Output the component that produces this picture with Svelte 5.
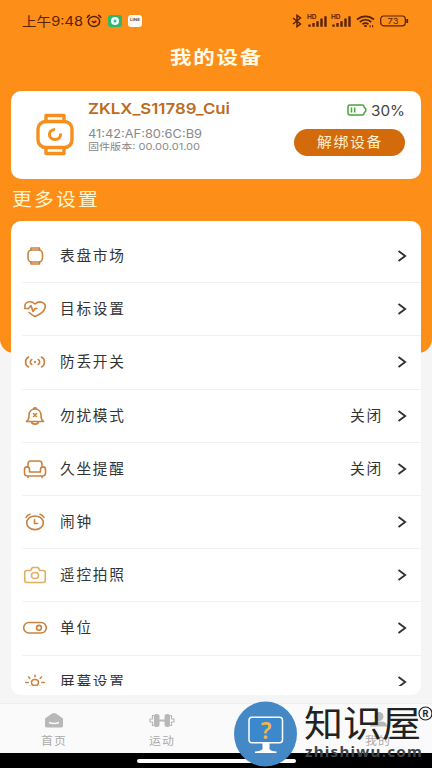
<script>
  const rows = [
    { icon: 'watch', label: '表盘市场' },
    { icon: 'heart', label: '目标设置' },
    { icon: 'signal', label: '防丢开关' },
    { icon: 'bell', label: '勿扰模式', value: '关闭' },
    { icon: 'sofa', label: '久坐提醒', value: '关闭' },
    { icon: 'alarm', label: '闹钟' },
    { icon: 'camera', label: '遥控拍照' },
    { icon: 'toggle', label: '单位' },
    { icon: 'sun', label: '屏幕设置' }
  ];

  // Stretches a single line of text horizontally to the given width.
  function fit(node, target) {
    const natural = node.getBoundingClientRect().width;
    node.style.transform = `scaleX(${target / natural})`;
    node.style.marginRight = `${target - natural}px`;
  }
</script>

{#snippet bars()}
  <svg width="21" height="14" viewBox="0 0 21 14">
    <text x="0" y="5.2" font-size="6" font-weight="700" textLength="9.5" lengthAdjust="spacingAndGlyphs" fill="#5a2206">HD</text>
    <path d="M2.500 10.500v2.200M6.500 9v3.700M10.500 7.200v5.500M14.500 4.500v8.200M18.500 2.200v10.500" stroke="#5a2206" stroke-width="2.400" />
  </svg>
{/snippet}

{#snippet icon(name)}
  <svg class="icon" class:light={name === 'camera'} width="26" height="26" viewBox="0 0 26 26">
    {#if name === 'watch'}
      <rect x="6" y="7" width="14.500" height="12" rx="4" />
      <path d="M9 7V5h8.500v2M9 19v2h8.500v-2" />
    {:else if name === 'heart'}
      <path d="M3 11C2 6.500 8 3.500 13 8c5-4.500 11.500-1 10 4-1 3.500-6 7-10 8.500-2-1-4-2.300-6-4M2.500 12.500h4l2.500-3 2 6 2-3h2" />
    {:else if name === 'signal'}
      <path d="M6.500 8C2.600 10 2.600 16 6.500 18M19.500 8c3.900 2 3.900 8 0 10M9.800 10.500c-2 1.300-2 3.700 0 5M16.200 10.500c2 1.300 2 3.700 0 5" />
      <circle cx="13" cy="13" r=".4" />
    {:else if name === 'bell'}
      <path d="M4.500 18.500c2-1.300 2.500-3 2.500-6C7 8.500 9.500 6 13 6s6 2.500 6 6.500c0 3 .5 4.700 2.500 6zM11.500 5.500c.5-1 2.500-1 3 0M9.500 18.500c0 3.500 7 3.500 7 0M11.500 10.500l3 3M14.500 10.500l-3 3" />
    {:else if name === 'sofa'}
      <path d="M6 11V8c0-2 1-3 3-3h8c2 0 3 1 3 3v3M7.500 16v-2.500c0-3.500-5-3.500-5 0V17c0 2 1 3 3 3h15c2 0 3-1 3-3v-3.500c0-3.500-5-3.500-5 0V16zM6 20v1.500M20 20v1.500" />
    {:else if name === 'alarm'}
      <ellipse cx="13" cy="13.800" rx="8.300" ry="6.800" />
      <path d="M4 8.300c1-1.600 2.300-2.500 4-3M22 8.300c-1-1.600-2.300-2.500-4-3M12.500 10.800v3.700h3" />
    {:else if name === 'camera'}
      <path d="M5 8.500h3.500L10.500 5.500h5.500l2 3h3c1.500 0 2.300.8 2.300 2v8c0 1.400-.8 2-2.300 2H5c-1.500 0-2.300-.6-2.300-2v-8c0-1.200.8-2 2.300-2z" />
      <ellipse cx="13" cy="13.500" rx="3.500" ry="3" />
    {:else if name === 'toggle'}
      <rect x="1.700" y="7.500" width="22.600" height="10.500" rx="5.250" />
      <circle cx="17" cy="12.800" r="2.400" />
    {:else}
      <ellipse cx="13" cy="13.500" rx="3.500" ry="3" />
      <path d="M13 6.200v1.500M6.500 8l1.300 1.300M19.500 8l-1.300 1.300M3.800 13.500h2.400M22.200 13.500h-2.400M6.500 18.500l1.500-1.200M19.500 18.500l-1.500-1.200" />
    {/if}
  </svg>
{/snippet}

<div class="screen">
  <header>
    <div class="status">
      <span class="time" use:fit={61}>上午9:48</span>
      <svg class="clock" width="16" height="14" viewBox="0 0 16 14" fill="none" stroke="#5a2206" stroke-width="1.500">
        <ellipse cx="8" cy="7.500" rx="5.700" ry="5" />
        <path d="M1 4C1.500 2.500 2.600 1.500 4 1M15 4c-.5-1.500-1.600-2.500-3-3M5.800 7L8 8.500 10.400 7" />
      </svg>
      <svg class="badge" width="14" height="12" viewBox="0 0 14 12">
        <rect width="14" height="12" rx="2.500" fill="#35b56c" />
        <circle cx="7" cy="6" r="4" fill="#ecfff8" /><circle cx="7" cy="6" r="1.500" fill="#3eb8b4" />
      </svg>
      <svg class="line" width="14" height="12" viewBox="0 0 14 12">
        <rect width="14" height="12" rx="3" fill="#fffaf0" />
        <text x="2" y="6" font-size="4" font-weight="700" textLength="10" lengthAdjust="spacingAndGlyphs" fill="#555">LINE</text>
      </svg>
      <span class="space"></span>
      <svg class="bt" width="10" height="14" viewBox="0 0 10 14" fill="none" stroke="#5a2206" stroke-width="1.500">
        <path d="M1 4l7.500 6L5 12.700V1.300L8.500 4 1 10" />
      </svg>
      {@render bars()}
      <span class="gap"></span>
      {@render bars()}
      <svg class="wifi" width="19" height="13" viewBox="0 0 19 13" fill="none" stroke="#5a2206" stroke-width="1.700">
        <path d="M1 4.500c5-4.300 12-4.300 17 0M3.800 7c3.500-2.900 8-2.900 11.400 0M6.500 9.300c2-1.500 4-1.500 6 0" />
        <path d="M8.300 11h2.400M13.500 11.300h1.200M16 11.300h1.200" stroke-width="2" />
      </svg>
      <svg width="29" height="12" viewBox="0 0 29 12">
        <rect x=".7" y="1" width="24.600" height="9.800" rx="3" fill="none" stroke="#5a2206" stroke-width="1.200" />
        <path d="M27.200 4v4" stroke="#5a2206" stroke-width="1.800" />
        <text x="7.500" y="8.900" font-size="8" textLength="11" lengthAdjust="spacingAndGlyphs" fill="#5a2206">73</text>
      </svg>
    </div>
    <h1><span use:fit={93}>我的设备</span></h1>

    <section class="device">
      <svg class="big" width="40" height="46" viewBox="0 0 40 46" fill="none" stroke="#f5901f" stroke-width="3.400" stroke-linejoin="round">
        <rect x="3" y="9.500" width="34" height="26" rx="7.500" />
        <path d="M11 9.500V3.500h18v6M11 35.500v6h18v-6" />
        <path d="M20 17.500c-8 .5-7 10 0 10 4 0 6-2.500 5.500-6" stroke-width="3" />
      </svg>
      <div class="info">
        <strong use:fit={142}>ZKLX_S11789_Cui</strong>
        <span class="mac" use:fit={114}>41:42:AF:80:6C:B9</span>
        <span class="fw" use:fit={112}>固件版本: 00.00.01.00</span>
      </div>
      <div class="side">
        <div class="power">
          <svg width="20" height="12" viewBox="0 0 20 12" fill="none" stroke="#4aa33b" stroke-width="1.500">
            <path d="M3 1h12.500c1 0 1.500 1 1.500 2l1.800 2v2L17 9c0 1-.5 2-1.500 2H3c-1.300 0-2-.7-2-2V3c0-1.300.7-2 2-2zM4.500 3.500v5M7.700 3.500v5" />
          </svg>
          <span use:fit={34}>30%</span>
        </div>
        <button><span use:fit={66}>解绑设备</span></button>
      </div>
    </section>
    <h2><span use:fit={88}>更多设置</span></h2>
  </header>

  <main>
    <div class="scroll">
      {#each rows as row}
        <div class="row">
          {@render icon(row.icon)}
          <span class="label" use:fit={row.label.length * 16.4}>{row.label}</span>
          <span class="space"></span>
          {#if row.value}<span class="value" use:fit={33}>{row.value}</span>{/if}
          <svg class="chevron" width="10" height="12" viewBox="0 0 10 12" fill="none" stroke="#303030" stroke-width="1.800">
            <path d="M1.500 1L8.200 6l-6.700 5" />
          </svg>
        </div>
      {/each}
    </div>
  </main>

  <nav>
    <div class="tab">
      <svg width="26" height="18" viewBox="0 0 26 18">
        <path d="M4 7.500L11 2.500q2-1.200 4 0l7 5V15q0 1.500-2 1.500H6Q4 16.500 4 15z" fill="#b8b8b8" />
        <path d="M8 11.500q5 2 10 0" stroke="#fafafa" stroke-width="1.500" fill="none" />
      </svg>
      <span use:fit={26}>首页</span>
    </div>
    <div class="tab">
      <svg width="26" height="18" viewBox="0 0 26 18" fill="#b8b8b8" stroke="#b8b8b8">
        <path d="M10 9.500h6" stroke-width="2" />
        <rect x="5.500" y="3.500" width="4.500" height="12" rx="1.500" /><rect x="16" y="3.500" width="4.500" height="12" rx="1.500" />
        <path d="M5 4.500H3.500v3.500H1v3h2.500v3.500H5M21 4.500h1.500v3.500H25v3h-2.500v3.500H21" fill="none" stroke-width="1.200" />
      </svg>
      <span use:fit={26}>运动</span>
    </div>
    <div class="tab"></div>
    <div class="tab">
      <svg width="26" height="18" viewBox="0 0 26 18" fill="#b8b8b8">
        <circle cx="14" cy="5.500" r="4.500" /><path d="M5 15.500q0-5 6-5h5q6 0 6 5z" />
      </svg>
      <span use:fit={26}>我的</span>
    </div>
  </nav>
  <footer><i></i></footer>

  <div class="mark">
    <svg width="64" height="66" viewBox="0 0 64 66">
      <ellipse cx="31.500" cy="33" rx="31.500" ry="32.500" fill="#4489c6" />
      <rect x="15" y="16.200" width="33.500" height="25.500" rx="3" fill="#3c88cc" stroke="#fff" stroke-width="1.500" />
      <path d="M28.500 42h7v6q1 2 7 2.500v1.500H21v-1.500q6-.5 7.500-2.500z" fill="#fff" />
      <text x="32" y="38" text-anchor="middle" font-size="23" font-weight="600" fill="#f0b83f" font-family="Noto Sans">?</text>
    </svg>
    <div class="words">
      <span class="name" use:fit={117}>知识屋</span>
      <span class="site" use:fit={118}>zhishiwu.com</span>
    </div>
    <svg class="reg" width="15" height="15" viewBox="0 0 15 15">
      <circle cx="7.500" cy="7.500" r="6.500" fill="none" stroke="#222" stroke-width="1.200" />
      <text x="7.500" y="10.700" text-anchor="middle" font-size="9" font-weight="700" fill="#222">R</text>
    </svg>
  </div>
</div>

<style>
  :global(body) { margin: 0; }
  .screen {
    position: relative;
    width: 432px;
    height: 768px;
    overflow: hidden;
    display: flex;
    flex-direction: column;
    background: #f5f5f5;
    font-family: Inter, 'Noto Sans CJK SC', sans-serif;
  }
  span, strong { display: block; width: max-content; white-space: nowrap; transform-origin: 0 50%; flex: none; }
  svg { display: block; flex: none; }
  header { height: 353px; flex: none; background: #fd8e17; border-radius: 0 0 14px 14px; box-sizing: border-box; }
  .status { height: 42px; padding: 0 23px 0 22px; display: flex; align-items: center; color: #5a2206; }
  .time { font-size: 13px; margin-top: -1px; }
  .clock { margin-left: 3px; }
  .badge { margin-left: 6px; }
  .line { margin-left: 6px; }
  .space { flex: 1; }
  .bt { margin-right: 5px; }
  .gap { width: 3px; }
  .wifi { margin: 0 5px 0 4px; }
  h1 { margin: 0; height: 49px; box-sizing: border-box; display: flex; justify-content: center; color: #fffbe8; font-size: 18.5px; line-height: 31px; letter-spacing: 1.5px; font-weight: 700; }
  .device { height: 88px; margin: 0 11px; box-sizing: border-box; border-radius: 10px; background: #fff; display: flex; padding: 0 16px 0 24px; }
  .big { margin-top: 21px; }
  .info { margin-left: 13px; padding-top: 8px; }
  .info strong { color: #bd6b20; font-size: 15px; line-height: 20px; font-weight: 600; }
  .mac { color: #888; font-size: 11.5px; line-height: 14px; margin-top: 8px; }
  .fw { color: #888; font-size: 9.5px; line-height: 11px; }
  .side { margin-left: auto; display: flex; flex-direction: column; align-items: flex-end; }
  .power { display: flex; align-items: center; height: 20px; margin-top: 9px; gap: 4px; color: #444; font-size: 14px; }
  button { width: 111px; height: 27px; margin-top: 9px; padding: 0; border: 0; border-radius: 14px; background: #d36a0c; color: #fff0cf; display: flex; align-items: center; justify-content: center; font: 14px/20px Inter, 'Noto Sans CJK SC', sans-serif; letter-spacing: 1.5px; }
  button span { margin-top: -2px; }
  h2 { margin: 7px 0 0 12px; color: #fff5d0; font-size: 18px; line-height: 27px; font-weight: 400; letter-spacing: 2px; }
  main { height: 474px; flex: none; margin: -132px 11px 0; padding: 9px 0 9px; box-sizing: border-box; background: #fff; border-radius: 10px; }
  .scroll { height: 456px; overflow: hidden; }
  .row { height: 53.2px; margin: 0 0 0 11px; padding-right: 14px; box-sizing: border-box; border-bottom: 1px solid #f2f2f2; display: flex; align-items: center; }
  .icon { fill: none; stroke: #c98240; stroke-width: 1.6; stroke-linecap: round; stroke-linejoin: round; }
  .icon.light { stroke: #dfae63; }
  .label, .value { color: #333; font-size: 14.3px; line-height: 20px; letter-spacing: 1.7px; }
  .label { margin-left: 12px; }
  .chevron { margin-left: 14px; }
  nav { height: 50px; margin-top: 8px; flex: none; background: #fafafa; border-top: 1px solid #eee; box-sizing: border-box; display: flex; }
  .tab { flex: 1; display: flex; flex-direction: column; align-items: center; padding-top: 7px; color: #aaa; font-size: 11px; line-height: 16px; }
  .tab span { margin-top: 4px; letter-spacing: 1px; }
  footer { flex: 1; background: #000; display: flex; justify-content: center; align-items: flex-start; }
  footer i { width: 159px; height: 4px; margin-top: 6px; border-radius: 2px; background: #fff; }
  .mark { position: absolute; left: 234px; top: 701px; display: flex; }
  .words { margin-left: 6px; padding-top: 2px; }
  .name { font-size: 36px; line-height: 42px; font-weight: 400; color: #222; }
  .site { font: 700 15px/18px 'Noto Sans', sans-serif; letter-spacing: 1.2px; color: #3f4549; margin: -3px 0 0 1px; }
  .reg { position: absolute; left: 184px; top: 5px; }
</style>
